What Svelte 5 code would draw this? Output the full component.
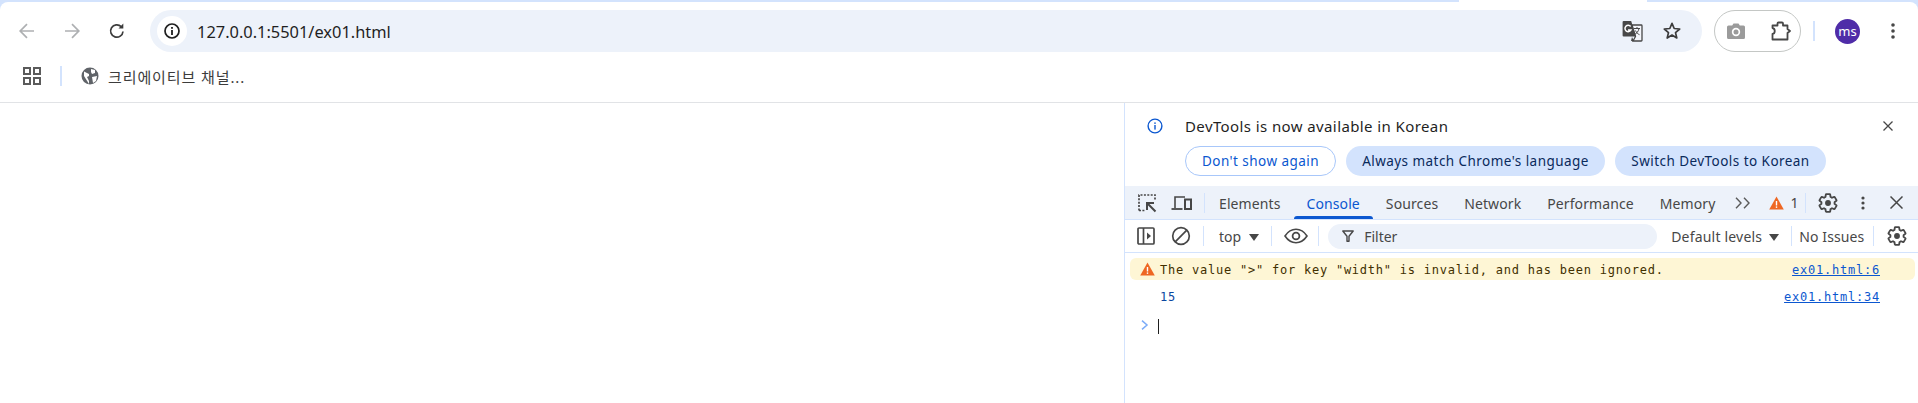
<script>
  const tabs = ["Elements", "Console", "Sources", "Network", "Performance", "Memory"];
  const gearPath =
    "M19.14 12.94c.04-.3.06-.61.06-.94 0-.32-.02-.64-.07-.94l2.03-1.58a.49.49 0 0 0 .12-.61l-1.92-3.32a.488.488 0 0 0-.59-.22l-2.39.96c-.5-.38-1.03-.7-1.62-.94l-.36-2.54a.484.484 0 0 0-.48-.41h-3.84c-.24 0-.43.17-.47.41l-.36 2.54c-.59.24-1.13.57-1.62.94l-2.39-.96c-.22-.08-.47 0-.59.22L2.74 8.87c-.12.21-.08.47.12.61l2.03 1.58c-.05.3-.09.63-.09.94s.02.64.07.94l-2.03 1.58a.49.49 0 0 0-.12.61l1.92 3.32c.12.22.37.29.59.22l2.39-.96c.5.38 1.03.7 1.62.94l.36 2.54c.05.24.24.41.48.41h3.84c.24 0 .44-.17.47-.41l.36-2.54c.59-.24 1.13-.56 1.62-.94l2.39.96c.22.08.47 0 .59-.22l1.92-3.32c.12-.22.07-.47-.12-.61l-2.01-1.58z";
</script>

{#snippet gear()}
  <svg width="22" height="22" viewBox="0 0 24 24" fill="none">
    <path d={gearPath} stroke="#474747" stroke-width="2" stroke-linejoin="round" />
    <circle cx="12" cy="12" r="3.200" fill="#474747" />
  </svg>
{/snippet}

{#snippet warnIcon()}
  <svg width="15" height="14" viewBox="0 0 15 14">
    <path d="M7.500 0.500 14.800 13.500H.2z" fill="#ee6723" />
    <rect x="6.800" y="5" width="1.400" height="4.500" fill="#fff" />
    <rect x="6.800" y="10.400" width="1.400" height="1.500" fill="#fff" />
  </svg>
{/snippet}

<div class="window">
  <header class="chrome">
    <div class="strip"><span class="tab-flare"></span></div>
    <div class="toolbar">
      <div class="nav">
        <svg width="18" height="18" viewBox="0 0 18 18" fill="none" stroke="#aeb0b2" stroke-width="1.700">
          <path d="M16 9H2.500M9 2.200 2.200 9 9 15.800" />
        </svg>
        <svg width="18" height="18" viewBox="0 0 18 18" fill="none" stroke="#aeb0b2" stroke-width="1.700">
          <path d="M2 9h13.500M9 2.200 15.800 9 9 15.800" />
        </svg>
        <svg width="18" height="18" viewBox="0 0 18 18" fill="none" stroke="#3c3c3c" stroke-width="1.700">
          <path d="M15 9.500A6.200 6.200 0 1 1 13.200 4.600" />
          <path d="M15.300 1.600v4.800h-4.800z" fill="#3c3c3c" stroke="none" />
        </svg>
      </div>
      <div class="omnibox">
        <span class="site-info">
          <svg width="18" height="18" viewBox="0 0 18 18" fill="none">
            <circle cx="9" cy="9" r="7" stroke="#1f1f1f" stroke-width="1.700" />
            <rect x="8.100" y="8" width="1.800" height="5" fill="#1f1f1f" />
            <rect x="8.100" y="5" width="1.800" height="1.800" fill="#1f1f1f" />
          </svg>
        </span>
        <span class="url">127.0.0.1:5501/ex01.html</span>
        <span class="omni-actions">
          <svg width="22" height="22" viewBox="0 0 22 22">
            <path d="M11 5h9.200a.8.8 0 0 1 .8.8v14.400a.8.8 0 0 1-.8.8H12l2.500-4.500z" fill="#f4f6fb" stroke="#474747" stroke-width="1.300" />
            <path d="M2.600 1h7.600l4.600 15.500H2.600a1 1 0 0 1-1-1V2a1 1 0 0 1 1-1z" fill="#474747" />
            <path d="M11 17l-1 4h3z" fill="#474747" />
            <path d="M9.700 6.500A3.200 3.200 0 1 0 10 10H7" fill="none" stroke="#fff" stroke-width="1.500" />
            <path d="M13 8.500h6M16 7v1.500M18 8.500c-.5 3-2.500 5-4.500 6M14.500 10.500c.8 2 2.300 3.500 4 4.200" fill="none" stroke="#474747" stroke-width="1" />
          </svg>
          <svg width="20" height="20" viewBox="0 0 20 20" fill="none">
            <path d="M10 2.400 12.200 7.500l5.500.5-4.200 3.600 1.300 5.400L10 14.100 5.200 17l1.300-5.400L2.300 8l5.500-.5z" stroke="#3c3c3c" stroke-width="1.700" stroke-linejoin="round" />
          </svg>
        </span>
      </div>
      <div class="ext-pill">
        <svg width="20" height="18" viewBox="0 0 20 18">
          <path d="M2.500 3.500h3.700L7.500 1.500h5l1.300 2h3.700a1.500 1.500 0 0 1 1.500 1.500v10.500a1.500 1.500 0 0 1-1.500 1.500h-15A1.500 1.500 0 0 1 1 15.500V5a1.500 1.500 0 0 1 1.500-1.500z" fill="#9b9b9b" />
          <circle cx="10" cy="10" r="4.200" fill="#fff" />
          <circle cx="10" cy="10" r="2.500" fill="#9b9b9b" />
        </svg>
        <svg width="20" height="20" viewBox="0 0 20 20" fill="none">
          <path d="M1.500 4.500h5v-2a1 1 0 0 1 1-1H11a1 1 0 0 1 1 1v2h4.500V8l2.500 2-2.500 2v6.500h-15V13c3-.5 3-5.500 0-6z" stroke="#474747" stroke-width="1.800" stroke-linejoin="round" />
        </svg>
      </div>
      <span class="tb-sep"></span>
      <span class="avatar">ms</span>
      <svg class="kebab" width="4" height="16" viewBox="0 0 4 16" fill="#474747">
        <circle cx="2" cy="2" r="1.800" /><circle cx="2" cy="8" r="1.800" /><circle cx="2" cy="14" r="1.800" />
      </svg>
    </div>
    <div class="bookmarks">
      <svg width="18" height="18" viewBox="0 0 18 18" fill="none" stroke="#5b5b5b" stroke-width="2">
        <rect x="1" y="1" width="6" height="6" /><rect x="11" y="1" width="6" height="6" />
        <rect x="1" y="11" width="6" height="6" /><rect x="11" y="11" width="6" height="6" />
      </svg>
      <span class="bm-sep"></span>
      <svg width="18" height="18" viewBox="0 0 18 18">
        <circle cx="9" cy="9" r="8.500" fill="#5f6368" />
        <path d="M3 4.500 8 7v2l-2 1 2 4v3L3 9zM10 2l4 1v3l-3 1-1-2zM11 10l5-1-1 5-3 2z" fill="#fff" />
      </svg>
      <span class="bm-label">크리에이티브 채널...</span>
    </div>
  </header>

  <main class="content">
    <div class="page"></div>
    <section class="devtools">
      <div class="infobar">
        <div class="info-row">
          <svg width="16" height="16" viewBox="0 0 16 16" fill="none">
            <circle cx="8" cy="8" r="6.900" stroke="#0b57d0" stroke-width="1.400" />
            <rect x="7.300" y="7" width="1.400" height="4.600" fill="#0b57d0" />
            <rect x="7.300" y="4.400" width="1.400" height="1.500" fill="#0b57d0" />
          </svg>
          <span class="info-text">DevTools is now available in Korean</span>
          <svg class="info-close" width="10" height="10" viewBox="0 0 10 10" stroke="#474747" stroke-width="1.300">
            <path d="M.5.500l9 9M9.500.500l-9 9" />
          </svg>
        </div>
        <div class="info-actions">
          <button class="outlined">Don't show again</button>
          <button class="tonal always">Always match Chrome's language</button>
          <button class="tonal switch">Switch DevTools to Korean</button>
        </div>
      </div>

      <div class="tabbar">
        <svg class="first-icon" width="20" height="20" viewBox="0 0 20 20" fill="none">
          <path d="M2 17.500V2h16v6M2 17.500h6" stroke="#474747" stroke-width="1.700" stroke-dasharray="2 1.400" />
          <path d="M18.500 18.500 10.500 10.500M10 17V10h7" stroke="#474747" stroke-width="2" />
        </svg>
        <svg class="device-icon" width="21" height="18" viewBox="0 0 21 18" fill="none" stroke="#474747" stroke-width="1.600">
          <path d="M4 14V3h10" /><path d="M.5 15h11" stroke-width="1.800" /><rect x="14" y="5.500" width="6" height="9.500" stroke-width="2" />
        </svg>
        <span class="bar-sep"></span>
        <nav class="tabs">
          {#each tabs as tab}
            <span class="tab" class:active={tab === "Console"}>{tab}</span>
          {/each}
        </nav>
        <svg class="more" width="16" height="12" viewBox="0 0 16 12" fill="none" stroke="#5b5b5b" stroke-width="1.400">
          <path d="M1 .8 6 6l-5 5.200M9 .8 14 6l-5 5.200" />
        </svg>
        <span class="warn-count">{@render warnIcon()}<span>1</span></span>
        <span class="bar-sep sep-gear"></span>
        <span class="gear-tab">{@render gear()}</span>
        <svg class="kebab-tab" width="4" height="14" viewBox="0 0 4 14" fill="#474747">
          <circle cx="2" cy="2" r="1.600" /><circle cx="2" cy="7" r="1.600" /><circle cx="2" cy="12" r="1.600" />
        </svg>
        <svg class="close-tab" width="13" height="13" viewBox="0 0 13 13" stroke="#474747" stroke-width="1.500">
          <path d="M.500.500l12 12M12.500.500l-12 12" />
        </svg>
      </div>

      <div class="console-bar">
        <svg class="first-icon" width="18" height="18" viewBox="0 0 18 18" fill="none" stroke="#474747" stroke-width="1.700">
          <rect x="1" y="1" width="16" height="16" rx="1" /><path d="M6.500 1v16" /><path d="M10 5.500 14 9l-4 3.500z" fill="#474747" stroke="none" />
        </svg>
        <svg class="clear-icon" width="20" height="20" viewBox="0 0 20 20" fill="none" stroke="#474747" stroke-width="1.700">
          <circle cx="10" cy="10" r="8.300" /><path d="M4.200 15.800 15.800 4.200" />
        </svg>
        <span class="bar-sep"></span>
        <span class="context">top<i class="caret"></i></span>
        <span class="bar-sep sep-eye"></span>
        <svg class="eye" width="24" height="16" viewBox="0 0 24 16" fill="none" stroke="#474747" stroke-width="1.600">
          <path d="M1 8c3-4.500 6.500-6.700 11-6.700S20 3.500 23 8c-3 4.500-6.500 6.700-11 6.700S4 12.500 1 8z" /><circle cx="12" cy="8" r="3.400" stroke-width="1.800" />
        </svg>
        <span class="bar-sep sep-filter"></span>
        <div class="filter">
          <svg width="12" height="12" viewBox="0 0 12 12" fill="none" stroke="#474747" stroke-width="1.400">
            <path d="M.8 1h10.400L7 6.200V11.200H5V6.200z" stroke-linejoin="round" />
          </svg>
          <span>Filter</span>
        </div>
        <span class="levels">Default levels<i class="caret"></i></span>
        <span class="bar-sep sep-issues"></span>
        <span class="issues">No Issues</span>
        <span class="bar-sep sep-last"></span>
        <span class="gear-console">{@render gear()}</span>
      </div>

      <div class="messages">
        <div class="msg warning">
          <span class="msg-icon">{@render warnIcon()}</span>
          <span class="msg-text">The value "&gt;" for key "width" is invalid, and has been ignored.</span>
          <a href="#6">ex01.html:6</a>
        </div>
        <div class="msg log">
          <span class="msg-text number">15</span>
          <a href="#34">ex01.html:34</a>
        </div>
        <div class="prompt">
          <svg width="8" height="10" viewBox="0 0 8 10" fill="none" stroke="#7cacf8" stroke-width="1.500">
            <path d="M1 .6 6 5 1 9.400" />
          </svg>
          <span class="cursor"></span>
        </div>
      </div>
    </section>
  </main>
</div>

<style>
  :global(body) {
    background: #d3e3fd;
  }

  .window {
    width: 1918px;
    height: 403px;
    display: flex;
    flex-direction: column;
    overflow: hidden;
    background: #fff;
    font-family: "Noto Sans", "Noto Sans CJK KR", sans-serif;
    color: #1f1f1f;
  }

  .chrome {
    height: 103px;
    flex: none;
    display: flex;
    flex-direction: column;
    border-bottom: 1px solid #e1e3e6;
    box-sizing: border-box;
    background: #d3e3fd;
  }

  .strip {
    height: 2px;
    flex: none;
    display: flex;
    padding-left: 1459px;
  }

  .tab-flare {
    width: 188px;
    height: 2px;
    background: #fff;
  }

  .toolbar {
    height: 54px;
    flex: none;
    display: flex;
    align-items: center;
    background: #fff;
    border-radius: 8px 8px 0 0;
    padding: 8px 0 4px;
    box-sizing: border-box;
  }

  .nav {
    width: 150px;
    flex: none;
    display: flex;
    gap: 27px;
    padding-left: 18px;
    box-sizing: border-box;
  }

  .omnibox {
    width: 1552px;
    height: 42px;
    flex: none;
    display: flex;
    align-items: center;
    background: #edf2fa;
    border-radius: 21px;
    padding-left: 7px;
    box-sizing: border-box;
  }

  .site-info {
    width: 30px;
    height: 30px;
    flex: none;
    display: grid;
    place-items: center;
    background: #fff;
    border-radius: 50%;
  }

  .url {
    margin-left: 10px;
    font-size: 16.400px;
    color: #1f1f1f;
  }

  .omni-actions {
    margin-left: auto;
    display: flex;
    align-items: center;
    gap: 19px;
    padding-right: 20px;
  }

  .ext-pill {
    width: 87px;
    height: 42px;
    flex: none;
    margin-left: 12px;
    display: flex;
    align-items: center;
    gap: 25px;
    padding-left: 11px;
    box-sizing: border-box;
    border: 1px solid #c4c7c5;
    border-radius: 21px;
    background: #fff;
  }

  .tb-sep {
    width: 2px;
    height: 20px;
    flex: none;
    margin-left: 12px;
    background: #d3e3fd;
  }

  .avatar {
    width: 25px;
    height: 25px;
    flex: none;
    margin-left: 20px;
    display: grid;
    place-items: center;
    border-radius: 50%;
    background: #4f2ca8;
    color: #fff;
    font-size: 13px;
    line-height: 1;
  }

  .kebab {
    margin-left: 31px;
    flex: none;
  }

  .bookmarks {
    flex: 1;
    display: flex;
    align-items: center;
    background: #fff;
    padding-left: 23px;
    padding-bottom: 6px;
  }

  .bm-sep {
    width: 2px;
    height: 20px;
    margin: 0 19px;
    background: #d3e3fd;
  }

  .bm-label {
    margin-left: 9px;
    font-size: 15px;
    letter-spacing: 0.900px;
    color: #3c3c3c;
  }

  .content {
    flex: 1;
    min-height: 0;
    display: flex;
  }

  .page {
    width: 1124px;
    flex: none;
    background: #fff;
  }

  .devtools {
    flex: 1;
    min-width: 0;
    display: flex;
    flex-direction: column;
    border-left: 1px solid #d3e3fd;
    background: #fff;
  }

  .infobar {
    height: 83px;
    flex: none;
    padding-left: 60px;
    position: relative;
  }

  .info-row {
    height: 43px;
    display: flex;
    align-items: center;
    position: relative;
  }

  .info-row > svg:first-child {
    margin-left: -38px;
    margin-top: 2px;
  }

  .info-text {
    margin-left: 22px;
    padding-top: 3px;
    font-size: 15px;
    letter-spacing: 0.400px;
    color: #1f1f1f;
  }

  .info-close {
    margin-left: auto;
    margin-right: 25px;
    margin-top: 2px;
  }

  .info-actions {
    display: flex;
    gap: 10px;
  }

  button {
    height: 30px;
    padding: 0;
    border-radius: 15px;
    border: none;
    font: inherit;
    font-size: 13.500px;
    letter-spacing: 0.450px;
    box-sizing: border-box;
  }

  .outlined {
    width: 151px;
    background: #fff;
    border: 1px solid #a8c7fa;
    color: #0b57d0;
  }

  .tonal {
    background: #d3e3fd;
    color: #0a2a5c;
  }

  .always {
    width: 259px;
  }

  .switch {
    width: 211px;
  }

  .tabbar {
    height: 34px;
    flex: none;
    display: flex;
    align-items: center;
    background: #edf2fa;
    border-bottom: 1px solid #d3e3fd;
    box-sizing: border-box;
  }

  .first-icon {
    margin-left: 12px;
    flex: none;
  }

  .device-icon {
    margin-left: 14px;
    flex: none;
  }

  .bar-sep {
    width: 1px;
    height: 20px;
    flex: none;
    background: #d3e3fd;
    margin-left: 12px;
  }

  .tabs {
    display: flex;
    align-self: stretch;
    margin-left: 1px;
  }

  .tab {
    display: flex;
    align-items: center;
    padding: 2px 13px 0;
    font-size: 14px;
    letter-spacing: 0.100px;
    color: #474747;
    position: relative;
  }

  .active {
    color: #0b57d0;
  }

  .active::after {
    content: "";
    position: absolute;
    left: 0;
    right: 0;
    bottom: 0;
    height: 3px;
    border-radius: 3px 3px 0 0;
    background: #0b57d0;
  }

  .more {
    margin-left: 7px;
    flex: none;
  }

  .warn-count {
    margin-left: 18px;
    display: flex;
    align-items: center;
    gap: 6px;
    font-size: 14px;
    color: #474747;
  }

  .sep-gear {
    margin-left: 7px;
  }

  .gear-tab {
    margin-left: 11px;
    display: flex;
  }

  .kebab-tab {
    margin-left: 22px;
    flex: none;
  }

  .close-tab {
    margin-left: 25px;
    flex: none;
  }

  .console-bar {
    height: 33px;
    flex: none;
    display: flex;
    align-items: center;
    border-bottom: 1px solid #d3e3fd;
    box-sizing: border-box;
  }

  .clear-icon {
    margin-left: 16px;
    flex: none;
  }

  .context {
    margin-left: 15px;
    padding-top: 1px;
    font-size: 14px;
    color: #474747;
    display: flex;
    align-items: center;
  }

  .caret {
    display: inline-block;
    margin-left: 7px;
    margin-top: 2px;
    border-left: 5px solid transparent;
    border-right: 5px solid transparent;
    border-top: 7px solid #474747;
  }

  .context .caret {
    margin-left: 8px;
  }

  .sep-eye {
    margin-left: 12px;
  }

  .eye {
    margin-left: 12px;
    flex: none;
  }

  .sep-filter {
    margin-left: 10px;
  }

  .filter {
    width: 329px;
    height: 25px;
    flex: none;
    margin-left: 9px;
    display: flex;
    align-items: center;
    gap: 10px;
    padding-left: 14px;
    box-sizing: border-box;
    border-radius: 13px;
    background: #edf2fa;
    font-size: 14px;
    color: #474747;
  }

  .levels {
    margin-left: 14px;
    padding-top: 1px;
    font-size: 14px;
    letter-spacing: 0.200px;
    color: #474747;
    display: flex;
    align-items: center;
  }

  .sep-issues {
    margin-left: 12px;
  }

  .issues {
    margin-left: 7px;
    padding-top: 1px;
    font-size: 14px;
    letter-spacing: 0.100px;
    color: #474747;
  }

  .sep-last {
    margin-left: 9px;
  }

  .gear-console {
    margin-left: 12px;
    display: flex;
  }

  .messages {
    flex: 1;
    padding-top: 5px;
    font-family: "DejaVu Sans Mono", monospace;
    font-size: 12px;
  }

  .msg {
    display: flex;
    align-items: center;
    padding-right: 35px;
    margin-left: 5px;
    margin-right: 3px;
    padding-left: 30px;
  }

  .warning {
    height: 22px;
    background: #fef6d5;
    border-radius: 6px;
    color: #412f00;
    position: relative;
    padding-top: 1px;
    box-sizing: border-box;
  }

  .msg-icon {
    position: absolute;
    left: 10px;
    top: 4px;
    display: flex;
  }

  .msg-text {
    letter-spacing: 0.770px;
  }

  .log {
    height: 33px;
  }

  .number {
    color: #0b47a0;
  }

  .msg a {
    margin-left: auto;
    color: #0b57d0;
    letter-spacing: 0.770px;
  }

  .prompt {
    height: 24px;
    display: flex;
    align-items: center;
    padding-left: 16px;
    gap: 9px;
  }

  .cursor {
    width: 1px;
    height: 15px;
    background: #1f1f1f;
    margin-top: 2px;
  }
</style>
